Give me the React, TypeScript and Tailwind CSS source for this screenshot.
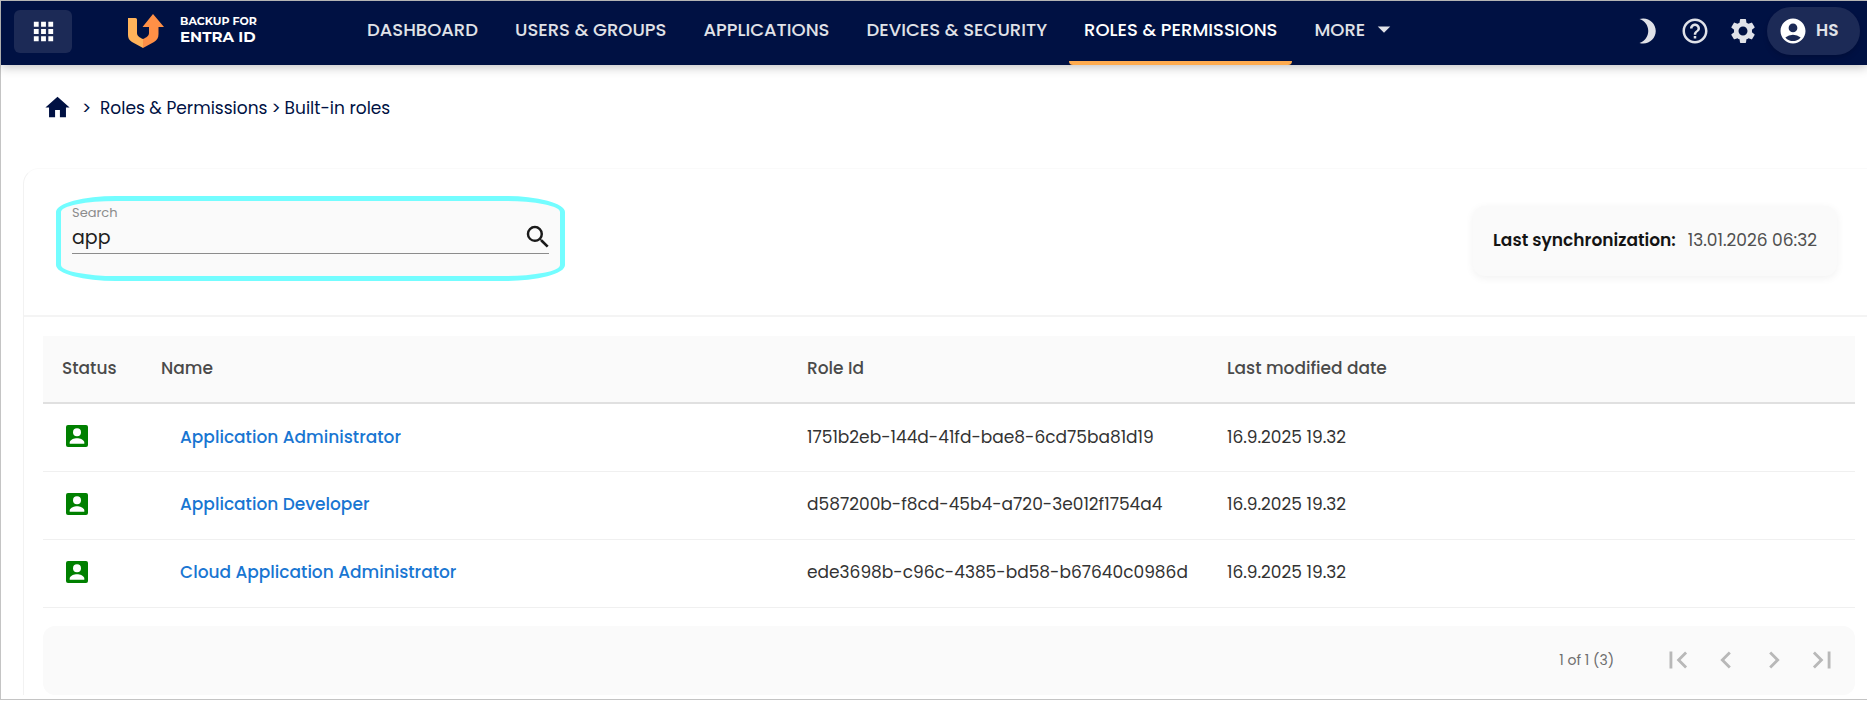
import {
  MdAccountCircle,
  MdApps,
  MdArrowDropDown,
  MdBrightness3,
  MdChevronLeft,
  MdChevronRight,
  MdFirstPage,
  MdHelpOutline,
  MdHome,
  MdLastPage,
  MdSearch,
  MdSettings,
} from "react-icons/md";

type Role = { name: string; id: string; modified: string };

const roles: Role[] = [
  { name: "Application Administrator", id: "1751b2eb-144d-41fd-bae8-6cd75ba81d19", modified: "16.9.2025 19.32" },
  { name: "Application Developer", id: "d587200b-f8cd-45b4-a720-3e012f1754a4", modified: "16.9.2025 19.32" },
  { name: "Cloud Application Administrator", id: "ede3698b-c96c-4385-bd58-b67640c0986d", modified: "16.9.2025 19.32" },
];

const navItems = [
  { label: "DASHBOARD", active: false },
  { label: "USERS & GROUPS", active: false },
  { label: "APPLICATIONS", active: false },
  { label: "DEVICES & SECURITY", active: false },
  { label: "ROLES & PERMISSIONS", active: true },
];

function Logo() {
  return (
    <a href="#" className="flex items-start gap-4 text-white">
      <svg width="36" height="34" viewBox="0 0 36 34" aria-hidden="true">
        <path d="M0 4H7.500Q9 4 9 5.500V19c0 3 2.500 4.500 6 6V34L4 28C1 26 0 24 0 21Z" fill="#ffb35a" />
        <path d="M25 0 36 13H30.500V20c0 4-1.500 6-4.500 8L15 34V25c3.500-1.500 6-3 6-6V13H14.500Z" fill="#ff9046" />
      </svg>
      <span className="flex flex-col font-['Montserrat','Poppins','Inter',sans-serif] font-bold">
        <span className="text-[11px] leading-[15px]">BACKUP FOR</span>
        <span className="text-[15px] leading-4">ENTRA ID</span>
      </span>
    </a>
  );
}

function StatusIcon() {
  return (
    <svg width="22" height="22" viewBox="0 0 22 22" role="img" aria-label="Active">
      <rect width="22" height="22" rx="2" fill="#008000" />
      <circle cx="11" cy="7.300" r="4" fill="#fff" />
      <path d="M3.700 18.800v-1.300c0-2.800 4.600-4.300 7.300-4.300s7.300 1.500 7.300 4.300v1.300z" fill="#fff" />
    </svg>
  );
}

function Header() {
  return (
    <header className="flex h-16 items-center bg-[#001143] text-[#e0e2e8] shadow-[0_2px_10px_rgba(0,0,0,0.25)]">
      <button
        type="button"
        aria-label="Apps"
        className="mr-14 mb-1 ml-[13px] flex h-[43px] w-[58px] items-center justify-center rounded-md bg-[#1c2a56] text-white"
      >
        <MdApps size={29} />
      </button>
      <div className="mb-1 w-56">
        <Logo />
      </div>
      <nav className="flex h-full grow gap-[7px] text-[18px] font-medium">
        {navItems.map((item) => (
          <a
            key={item.label}
            href="#"
            aria-current={item.active ? "page" : undefined}
            className={
              item.active
                ? "flex flex-col px-[15px] whitespace-nowrap text-white"
                : "flex flex-col px-[15px] whitespace-nowrap"
            }
          >
            <span className="grow leading-[58px]">{item.label}</span>
            {item.active && <span className="-mx-[15px] h-1 rounded-b-sm bg-[#ffac50]" />}
          </a>
        ))}
        <button type="button" className="flex items-center gap-1 px-[15px] pb-2 font-medium">
          MORE <MdArrowDropDown size={30} />
        </button>
      </nav>
      <div className="mb-1 flex items-center pr-[7px]">
        <button type="button" aria-label="Dark mode" className="flex w-12 justify-center">
          <MdBrightness3 size={30} />
        </button>
        <button type="button" aria-label="Help" className="flex w-12 justify-center">
          <MdHelpOutline size={30} />
        </button>
        <button type="button" aria-label="Settings" className="flex w-12 justify-center">
          <MdSettings size={30} />
        </button>
        <button
          type="button"
          className="flex h-12 w-[93px] items-center gap-2 rounded-full bg-[#1c2a56] pl-[11px] text-[17px] font-semibold shadow-md"
        >
          <MdAccountCircle size={30} className="text-white" />
          HS
        </button>
      </div>
    </header>
  );
}

function Breadcrumb() {
  return (
    <nav aria-label="Breadcrumb" className="flex items-center pt-7 pl-[42px] text-[17px] leading-7 text-[#001143]">
      <a href="#" aria-label="Home">
        <MdHome size={29} />
      </a>
      <span className="ml-2.5 w-[18px]">&gt;</span>
      <a href="#">Roles &amp; Permissions</a>
      <span className="mx-1">&gt;</span>
      <span>Built-in roles</span>
    </nav>
  );
}

function Toolbar() {
  return (
    <div className="flex items-start justify-between border-b-2 border-[#f4f4f4] pt-[27px] pr-[30px] pb-[34px] pl-8">
      <div className="h-[85px] w-[509px] rounded-[60px/16px] border-[5px] border-[#73fdff] bg-[#fafafa] px-[11px] pt-1">
        <label htmlFor="search" className="block text-[13px] leading-4 text-[#8c8c8c]">
          Search
        </label>
        <div className="flex items-center border-b border-[#8c8c8c]">
          <input
            id="search"
            type="text"
            defaultValue="app"
            className="h-8 min-w-0 grow bg-transparent text-[19px] text-[#1e1e1e] outline-none"
          />
          <button type="button" aria-label="Run search" className="-mr-1 text-[#1a1a1a]">
            <MdSearch size={30} />
          </button>
        </div>
      </div>
      <div className="mt-2.5 flex h-[70px] items-center gap-3 rounded-xl bg-[#fafafa] px-5 text-[17px] shadow-[0_2px_8px_rgba(0,0,0,0.06)]">
        <span className="font-semibold text-[#141414]">Last synchronization:</span>
        <span className="text-[#505050]">13.01.2026 06:32</span>
      </div>
    </div>
  );
}

function RolesTable() {
  return (
    <table className="w-full table-fixed border-collapse text-left text-[17px]">
      <colgroup>
        <col className="w-[98px]" />
        <col className="w-[646px]" />
        <col className="w-[420px]" />
        <col />
      </colgroup>
      <thead>
        <tr className="h-[67px] border-b-2 border-[#e0e0e0] bg-[#fafafa] text-[#4a4a4a]">
          <th className="pl-[19px] font-medium">Status</th>
          <th className="pl-5 font-medium">Name</th>
          <th className="pl-5 font-medium">Role Id</th>
          <th className="pl-5 font-medium">Last modified date</th>
        </tr>
      </thead>
      <tbody>
        {roles.map((role) => (
          <tr key={role.id} className="h-[68px] border-b border-[#f0f0f0] text-[#333]">
            <td className="pb-[3px] pl-[23px]">
              <StatusIcon />
            </td>
            <td className="pl-[39px]">
              <a href="#" className="font-medium text-[#1976d2]">
                {role.name}
              </a>
            </td>
            <td className="pl-5">{role.id}</td>
            <td className="pl-5">{role.modified}</td>
          </tr>
        ))}
      </tbody>
    </table>
  );
}

function Pagination() {
  return (
    <div className="mt-[18px] flex h-[69px] items-center justify-end rounded-xl bg-[#fafafa] pr-[9px] text-[#b8b8b8]">
      <span className="mr-10 text-sm text-[#6e6e6e]">1 of 1 (3)</span>
      <button type="button" aria-label="First page" className="flex w-12 justify-center">
        <MdFirstPage size={34} />
      </button>
      <button type="button" aria-label="Previous page" className="flex w-12 justify-center">
        <MdChevronLeft size={34} />
      </button>
      <button type="button" aria-label="Next page" className="flex w-12 justify-center">
        <MdChevronRight size={34} />
      </button>
      <button type="button" aria-label="Last page" className="flex w-12 justify-center">
        <MdLastPage size={34} />
      </button>
    </div>
  );
}

export default function App() {
  return (
    <div className="border-t border-b border-l border-[#c4c4c4] bg-white pb-1 font-['Poppins','Inter',sans-serif]">
      <Header />
      <Breadcrumb />
      <main className="mt-[46px] ml-[22px] rounded-tl-2xl border-t border-l border-t-[#fafafa] border-l-[#f2f2f2]">
        <Toolbar />
        <section className="pt-[19px] pr-3 pl-[19px]">
          <RolesTable />
          <Pagination />
        </section>
      </main>
    </div>
  );
}
